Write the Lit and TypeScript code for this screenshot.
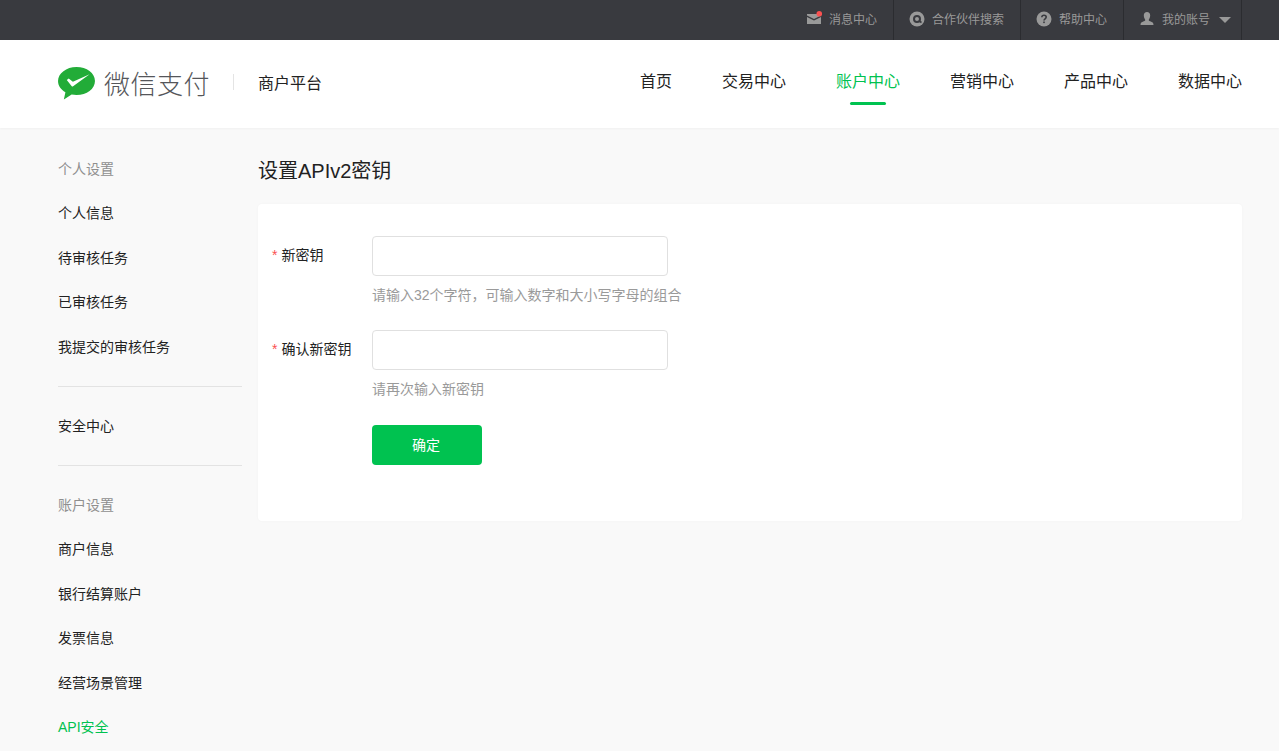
import { LitElement, css, html } from "lit";
import { customElement } from "lit/decorators.js";

const NAV = ["首页", "交易中心", "账户中心", "营销中心", "产品中心", "数据中心"];

@customElement("app-root")
export class AppRoot extends LitElement {
  static styles = css`
    :host {
      display: block;
      height: 751px;
      overflow: hidden;
      background: #f9f9f9;
      font-family: "Liberation Sans", "Noto Sans CJK SC", sans-serif;
      font-size: 14px;
      color: #353535;
    }
    .topbar {
      height: 40px;
      background: #393a3f;
      display: flex;
      justify-content: flex-end;
      padding-right: 37px;
      color: #999;
      font-size: 12px;
      line-height: 38px;
    }
    .tool {
      display: flex;
      align-items: center;
      gap: 8px;
      padding: 0 15px;
      border-right: 1px solid #2b2c30;
    }
    .tool svg { display: block; margin-top: -2px; }
    .tool span:not(.caret) { margin-left: -1px; margin-right: 1px; }
    .caret {
      width: 0;
      height: 0;
      border: 6px solid transparent;
      border-top: 6px solid #999;
      border-bottom: 0;
      margin-right: -5px;
    }
    .header {
      height: 88px;
      background: #fff;
      box-shadow: 0 1px 2px rgba(0, 0, 0, 0.04);
      display: flex;
      align-items: center;
      padding: 0 37px 0 58px;
      position: relative;
    }
    .brandline { display: flex; align-items: center; margin-bottom: 4px; }
    .logo { display: flex; align-items: center; gap: 8px; }
    .logo svg { margin: 3px 0 0 -1px; }
    .logo-text {
      font-size: 26px;
      color: #55565a;
      font-weight: 300;
      letter-spacing: 0.5px;
    }
    .brand-sep {
      width: 1px;
      height: 16px;
      background: #e4e4e4;
      margin: 0 24px 0 23px;
    }
    .brand { font-size: 16px; color: #222; }
    .nav { margin-left: auto; display: flex; gap: 50px; }
    .nav-item {
      font-size: 16px;
      color: #222;
      height: 88px;
      line-height: 84px;
      position: relative;
    }
    .nav-item.active { color: #00c250; }
    .nav-item.active::after {
      content: "";
      position: absolute;
      left: 50%;
      bottom: 23px;
      width: 36px;
      height: 3px;
      margin-left: -18px;
      border-radius: 2px;
      background: #00c250;
    }
    .body { display: flex; padding: 0 37px 0 58px; }
    .side { width: 184px; flex: none; margin-right: 16px; padding-top: 18.5px; }
    .side-item { height: 44.5px; line-height: 44px; color: #222; }
    .side-item.head { color: #8f8f8f; }
    .side-item.active { color: #00c250; }
    .side-sep { height: 1px; background: #e3e3e3; margin: 17px 0 16.5px; }
    .main { flex: 1; min-width: 0; }
    h1 {
      margin: 0;
      font-weight: 400;
      font-size: 20px;
      color: #222;
      line-height: 28px;
      padding: 29px 0 19px;
    }
    .card {
      background: #fff;
      border-radius: 4px;
      box-shadow: 0 0 3px rgba(0, 0, 0, 0.03);
      height: 317px;
      padding-top: 32px;
      box-sizing: border-box;
    }
    .row { display: flex; margin-bottom: 25px; }
    .label {
      width: 114px;
      box-sizing: border-box;
      padding-left: 14px;
      line-height: 39px;
      color: #222;
      flex: none;
    }
    .label i { color: #fa5151; font-style: normal; margin-right: 4px; }
    .input {
      width: 296px;
      height: 40px;
      box-sizing: border-box;
      border: 1px solid #e0e0e0;
      border-radius: 4px;
      background: #fff;
      display: block;
      outline: none;
    }
    .hint {
      color: #9a9a9a;
      line-height: 20px;
      margin-top: 9px;
    }
    .btn {
      display: block;
      margin: 26px 0 0 114px;
      width: 110px;
      height: 40px;
      border: 0;
      border-radius: 4px;
      background: #00c250;
      color: #fff;
      font: inherit;
      padding: 0 2px 2px 0;
    }
  `;

  render() {
    return html`
      <div class="topbar">
        <div class="tool">
          <svg width="16" height="16" viewBox="0 0 16 16">
            <path d="M1 3h14v1.500L8 8 1 4.500z" fill="#999" />
            <path d="M1 6 8 9.500 15 6v7H1z" fill="#999" />
            <circle cx="13.300" cy="2.800" r="2.800" fill="#fa5151" />
          </svg>
          <span>消息中心</span>
        </div>
        <div class="tool">
          <svg width="16" height="16" viewBox="0 0 16 16">
            <circle cx="8" cy="8" r="7.500" fill="#999" />
            <circle cx="8" cy="8" r="3" fill="none" stroke="#393a3f" stroke-width="2" />
            <path d="M10 10l2.500 1.500" stroke="#393a3f" stroke-width="1.600" />
          </svg>
          <span>合作伙伴搜索</span>
        </div>
        <div class="tool">
          <svg width="16" height="16" viewBox="0 0 16 16">
            <circle cx="8" cy="8" r="7.500" fill="#999" />
            <path
              d="M5.800 6.200C5.900 4.900 6.800 4.200 8 4.200c1.300 0 2.200.8 2.200 1.900 0 1.700-2.200 1.700-2.200 3.500"
              fill="none"
              stroke="#393a3f"
              stroke-width="1.600"
            />
            <rect x="7.200" y="10.500" width="1.600" height="1.600" fill="#393a3f" />
          </svg>
          <span>帮助中心</span>
        </div>
        <div class="tool">
          <svg width="16" height="16" viewBox="0 0 16 16">
            <path
              d="M8 1c2 0 3.200 1.500 3.200 3.500S10 8 9.700 9c0 .8 1 1.200 2.500 1.700 1.500.5 2.300 1.300 2.300 3.300H1.500c0-2 .8-2.800 2.300-3.300C5.300 10.200 6.300 9.800 6.300 9 6 8 4.800 6.500 4.800 4.500S6 1 8 1z"
              fill="#999"
            />
          </svg>
          <span>我的账号</span>
          <span class="caret"></span>
        </div>
      </div>
      <div class="header">
        <div class="brandline">
          <div class="logo">
            <svg width="39" height="35" viewBox="0 0 39 36">
              <path
                d="M19.500 1C9 1 .5 7.500.5 15.500c0 4.800 3 9 7.600 11.600L6.500 34.500l8-5.200c1.600.3 3.300.5 5 .5 10.500 0 19-6.500 19-14.500S30 1 19.500 1z"
                fill="#22ac38"
              />
              <path
                d="M9.500 14.500l2-1.600 4.300 3.300L33 8.500 16 20.800c-.5.300-1 .3-1.400-.1z"
                fill="#fff"
              />
            </svg>
            <span class="logo-text">微信支付</span>
          </div>
          <span class="brand-sep"></span>
          <span class="brand">商户平台</span>
        </div>
        <nav class="nav">
          ${NAV.map(
            (n, i) =>
              html`<div class="nav-item ${i === 2 ? "active" : ""}">${n}</div>`,
          )}
        </nav>
      </div>
      <div class="body">
        <aside class="side">
          <div class="side-item head">个人设置</div>
          <div class="side-item">个人信息</div>
          <div class="side-item">待审核任务</div>
          <div class="side-item">已审核任务</div>
          <div class="side-item">我提交的审核任务</div>
          <div class="side-sep"></div>
          <div class="side-item">安全中心</div>
          <div class="side-sep"></div>
          <div class="side-item head">账户设置</div>
          <div class="side-item">商户信息</div>
          <div class="side-item">银行结算账户</div>
          <div class="side-item">发票信息</div>
          <div class="side-item">经营场景管理</div>
          <div class="side-item active">API安全</div>
        </aside>
        <main class="main">
          <h1>设置APIv2密钥</h1>
          <section class="card">
            <div class="row">
              <div class="label"><i>*</i>新密钥</div>
              <div>
                <input class="input" type="password" />
                <div class="hint">请输入32个字符，可输入数字和大小写字母的组合</div>
              </div>
            </div>
            <div class="row">
              <div class="label"><i>*</i>确认新密钥</div>
              <div>
                <input class="input" type="password" />
                <div class="hint">请再次输入新密钥</div>
              </div>
            </div>
            <button class="btn">确定</button>
          </section>
        </main>
      </div>
    `;
  }
}
